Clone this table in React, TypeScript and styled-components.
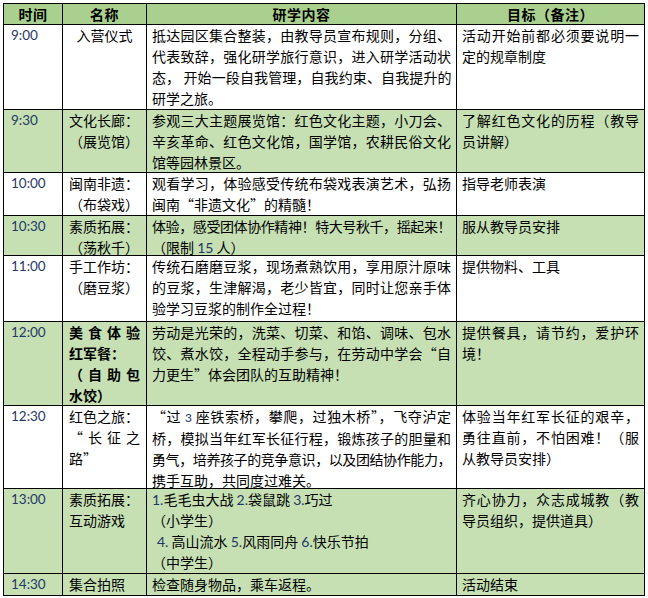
import React from 'react';
import styled, { createGlobalStyle } from 'styled-components';

const Global = createGlobalStyle`
  html, body { margin: 0; padding: 0; background: #ffffff; }
  body {
    font-family: "Noto Sans CJK SC", "Noto Sans", sans-serif;
    color: #000000;
  }
`;

const COLS = '59px 84px 310px 188px';
const HEADER_BG = '#a9d08e';
const GREEN_BG = '#c6e0b4';

const Page = styled.div`
  padding: 3px;
`;

const Table = styled.div`
  display: flex;
  flex-direction: column;
  width: 642px;
  box-sizing: border-box;
  border-top: 1px solid #000;
  border-left: 1px solid #000;
`;

const Row = styled.div<{ $h: number; $bg: string }>`
  display: grid;
  grid-template-columns: ${COLS};
  height: ${(p) => p.$h + 1}px;
  background: ${(p) => p.$bg};
`;

const Cell = styled.div<{ $pad?: number; $align?: string }>`
  box-sizing: border-box;
  border-right: 1px solid #000;
  border-bottom: 1px solid #000;
  padding: 0 ${(p) => p.$pad ?? 5}px;
  font-size: 14px;
  line-height: 21px;
  text-align: ${(p) => p.$align ?? 'left'};
  overflow: hidden;
`;

const HeadCell = styled(Cell)`
  font-weight: 700;
  text-align: center;
  letter-spacing: 0.5px;
`;

const TimeCell = styled(Cell)`
  font-family: Lato, "Liberation Sans", sans-serif;
  font-size: 13.5px;
  color: #1f3864;
  padding-left: 7px;
`;

const NameCell = styled(Cell)<{ $bold?: boolean }>`
  font-weight: ${(p) => (p.$bold ? 700 : 400)};
`;

const Line = styled.div<{ $j?: boolean; $tight?: boolean; $indent?: number }>`
  white-space: nowrap;
  text-align: ${(p) => (p.$j ? 'justify' : 'inherit')};
  text-align-last: ${(p) => (p.$j ? 'justify' : 'auto')};
  letter-spacing: ${(p) => (p.$tight ? '-0.5px' : 'normal')};
  padding-left: ${(p) => p.$indent ?? 0}px;
`;

const Num = styled.span<{ $small?: boolean }>`
  font-family: Lato, "Liberation Sans", sans-serif;
  font-size: ${(p) => (p.$small ? 12 : 14)}px;
  color: #1f3864;
`;

type L = { t: React.ReactNode; j?: boolean; tight?: boolean; indent?: number };

const para = (lines: React.ReactNode[], tightIdx: number[] = []): L[] =>
  lines.map((t, i) => ({ t, j: i < lines.length - 1, tight: tightIdx.includes(i) }));

type RowData = {
  time: string;
  h: number;
  green?: boolean;
  name: L[];
  nameAlign?: string;
  nameBold?: boolean;
  content: L[];
  goal: L[];
};

const rows: RowData[] = [
  {
    time: '9:00',
    h: 84,
    name: [{ t: '入营仪式' }],
    nameAlign: 'center',
    content: para([
      '抵达园区集合整装，由教导员宣布规则，分组、',
      '代表致辞，强化研学旅行意识，进入研学活动状',
      '态， 开始一段自我管理，自我约束、自我提升的',
      '研学之旅。',
    ], [2]),
    goal: para(['活动开始前都必须要说明一', '定的规章制度']),
  },
  {
    time: '9:30',
    h: 62,
    green: true,
    name: [{ t: '文化长廊：' }, { t: '（展览馆）' }],
    content: para([
      '参观三大主题展览馆：红色文化主题，小刀会、',
      '辛亥革命、红色文化馆，国学馆，农耕民俗文化',
      '馆等园林景区。',
    ]),
    goal: para(['了解红色文化的历程（教导', '员讲解）']),
  },
  {
    time: '10:00',
    h: 42,
    name: [{ t: '闽南非遗：' }, { t: '（布袋戏）' }],
    content: para([
      '观看学习，体验感受传统布袋戏表演艺术，弘扬',
      '闽南“非遗文化”的精髓！',
    ]),
    goal: [{ t: '指导老师表演' }],
  },
  {
    time: '10:30',
    h: 39,
    green: true,
    name: [{ t: '素质拓展：' }, { t: '（荡秋千）' }],
    content: para(
      [
        '体验，感受团体协作精神！特大号秋千，摇起来！',
        <>（限制 <Num>15</Num> 人）</>,
      ],
      [0],
    ),
    goal: [{ t: '服从教导员安排' }],
  },
  {
    time: '11:00',
    h: 65,
    name: [{ t: '手工作坊：' }, { t: '（磨豆浆）' }],
    content: para([
      '传统石磨磨豆浆，现场煮熟饮用，享用原汁原味',
      '的豆浆，生津解渴，老少皆宜，同时让您亲手体',
      '验学习豆浆的制作全过程！',
    ]),
    goal: [{ t: '提供物料、工具' }],
  },
  {
    time: '12:00',
    h: 83,
    green: true,
    nameBold: true,
    name: [
      { t: '美食体验', j: true },
      { t: '红军餐：' },
      { t: '（自助包', j: true },
      { t: '水饺）' },
    ],
    content: para([
      '劳动是光荣的，洗菜、切菜、和馅、调味、包水',
      '饺、煮水饺，全程动手参与，在劳动中学会“自',
      '力更生”体会团队的互助精神！',
    ]),
    goal: para(['提供餐具，请节约，爱护环', '境！']),
  },
  {
    time: '12:30',
    h: 82,
    name: [{ t: '红色之旅：' }, { t: '“长征之', j: true }, { t: '路”' }],
    content: para(
      [
        <>“过 <Num $small>3</Num> 座铁索桥，攀爬，过独木桥”，飞夺泸定</>,
        '桥，模拟当年红军长征行程，锻炼孩子的胆量和',
        '勇气，培养孩子的竞争意识，以及团结协作能力，',
        '携手互助，共同度过难关。',
      ],
      [2],
    ),
    goal: para(['体验当年红军长征的艰辛，', '勇往直前，不怕困难！（服', '从教导员安排）']),
  },
  {
    time: '13:00',
    h: 84,
    green: true,
    name: [{ t: '素质拓展：' }, { t: '互动游戏' }],
    content: [
      { t: <><Num>1.</Num>毛毛虫大战 <Num>2.</Num>袋鼠跳 <Num>3.</Num>巧过</> },
      { t: '（小学生）' },
      { t: <><Num>4.</Num> 高山流水 <Num>5.</Num>风雨同舟 <Num>6.</Num>快乐节拍</>, indent: 5 },
      { t: '（中学生）' },
    ],
    goal: para(['齐心协力，众志成城教（教', '导员组织，提供道具）']),
  },
  {
    time: '14:30',
    h: 21,
    green: true,
    name: [{ t: '集合拍照' }],
    content: [{ t: '检查随身物品，乘车返程。' }],
    goal: [{ t: '活动结束' }],
  },
];

const renderLines = (lines: L[]) =>
  lines.map((l, i) => (
    <Line key={i} $j={l.j} $tight={l.tight} $indent={l.indent}>
      {l.t}
    </Line>
  ));

export default function App() {
  return (
    <>
      <Global />
      <Page>
        <Table>
          <Row $h={20} $bg={HEADER_BG}>
            <HeadCell>时间</HeadCell>
            <HeadCell>名称</HeadCell>
            <HeadCell>研学内容</HeadCell>
            <HeadCell>目标（备注）</HeadCell>
          </Row>
          {rows.map((r) => (
            <Row key={r.time} $h={r.h} $bg={r.green ? GREEN_BG : '#ffffff'}>
              <TimeCell>{r.time}</TimeCell>
              <NameCell $pad={6} $align={r.nameAlign} $bold={r.nameBold}>
                {renderLines(r.name)}
              </NameCell>
              <Cell>{renderLines(r.content)}</Cell>
              <Cell>{renderLines(r.goal)}</Cell>
            </Row>
          ))}
        </Table>
      </Page>
    </>
  );
}
